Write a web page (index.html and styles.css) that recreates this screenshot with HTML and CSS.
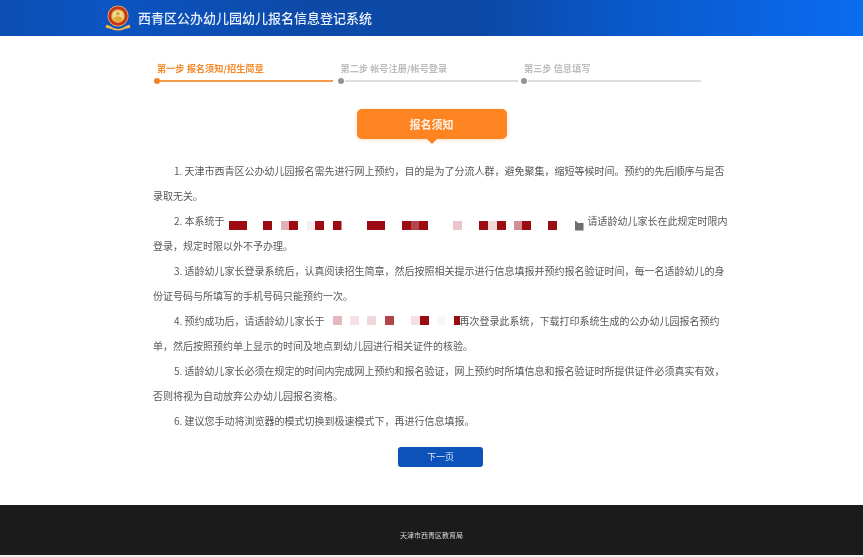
FILE: index.html
```html
<!DOCTYPE html>
<html lang="zh-CN">
<head>
<meta charset="utf-8">
<title>西青区公办幼儿园幼儿报名信息登记系统</title>
<link rel="stylesheet" href="styles.css">
</head>
<body>
<div class="page">
  <header class="top">
    <svg class="logo" viewBox="0 0 26 26" width="26" height="26" aria-hidden="true">
      <circle cx="13" cy="11" r="10.500" fill="#f0c060"/>
      <circle cx="13" cy="11" r="9.800" fill="#c4341f"/>
      <circle cx="13" cy="11" r="6.800" fill="#f2b53c"/>
      <circle cx="13" cy="11" r="5.600" fill="#e6dc9c"/>
      <path d="M8.500 13q4.500-3.500 9 0q-1 3.500-4.500 3.500t-4.500-3.500z" fill="#e2a52e"/>
      <circle cx="13" cy="8.800" r="1.800" fill="#d6a12f"/>
      <path d="M1.500 19.500l3.500 1.500q4 3 8 3t8-3l3.500-1.500 1 3q-4 1-6 1.500-3 1.500-6.500 1.500t-6.500-1.500q-2-.5-6-1.500z" fill="#f4bb45"/>
    </svg>
    <h1 class="title">西青区公办幼儿园幼儿报名信息登记系统</h1>
  </header>

  <main class="main">
    <ol class="steps">
      <li class="step active"><span class="step-label">第一步 报名须知/招生简章</span><span class="track"><i class="dot"></i><i class="bar"></i></span></li>
      <li class="step"><span class="step-label">第二步 帐号注册/帐号登录</span><span class="track"><i class="dot"></i><i class="bar"></i></span></li>
      <li class="step"><span class="step-label">第三步 信息填写</span><span class="track"><i class="dot"></i><i class="bar"></i></span></li>
    </ol>

    <div class="notice-wrap"><h2 class="notice">报名须知</h2></div>

    <section class="terms">
      <p>1. 天津市西青区公办幼儿园报名需先进行网上预约，目的是为了分流人群，避免聚集，缩短等候时间。预约的先后顺序与是否录取无关。</p>
      <p>2. 本系统于<svg class="mosaic mosaic-a" width="358" height="10" viewBox="0 0 358 10" aria-hidden="true">
        <g fill="#9c0a12">
          <rect x="1" y="0" width="18" height="9"/><rect x="35" y="0" width="9" height="9"/>
          <rect x="61" y="0" width="9" height="9"/><rect x="87" y="0" width="9" height="9"/>
          <rect x="105" y="0" width="8.500" height="9"/><rect x="139" y="0" width="18" height="9"/>
          <rect x="174" y="0" width="26" height="9"/><rect x="251" y="0" width="9" height="9"/>
          <rect x="269" y="0" width="9" height="9"/><rect x="294" y="0" width="9" height="9"/>
          <rect x="320" y="0" width="9" height="9"/>
        </g>
        <rect x="53" y="0" width="8" height="9" fill="#e2b0b4"/>
        <rect x="79" y="0" width="8" height="9" fill="#f8ecee"/>
        <rect x="183" y="0" width="8" height="9" fill="#b5454c"/>
        <rect x="225" y="0" width="9" height="9" fill="#e8c6cb"/>
        <rect x="260" y="0" width="9" height="9" fill="#eed8da"/>
        <rect x="286" y="0" width="8" height="9" fill="#cf9095"/>
        <path d="M347 -1l3 3h5.500v7.500h-8.500z" fill="#6e6e70"/>
      </svg>请适龄幼儿家长在此规定时限内登录，规定时限以外不予办理。</p>
      <p>3. 适龄幼儿家长登录系统后，认真阅读招生简章，然后按照相关提示进行信息填报并预约报名验证时间，每一名适龄幼儿的身份证号码与所填写的手机号码只能预约一次。</p>
      <p>4. 预约成功后，请适龄幼儿家长于<svg class="mosaic mosaic-b" width="135" height="10" viewBox="0 0 135 10" aria-hidden="true">
        <rect x="8" y="0" width="9" height="9" fill="#e4b8bc"/>
        <rect x="25" y="0" width="9" height="9" fill="#f6e2e5"/>
        <rect x="42" y="0" width="9" height="9" fill="#f1d6da"/>
        <rect x="60" y="0" width="9" height="9" fill="#b3444b"/>
        <rect x="86" y="0" width="9" height="9" fill="#f6e0e4"/>
        <rect x="95" y="0" width="9" height="9" fill="#9c0a12"/>
        <rect x="112" y="0" width="8" height="9" fill="#faf5f6"/>
        <rect x="129" y="0" width="6" height="9" fill="#9c0a12"/>
      </svg>再次登录此系统，下载打印系统生成的公办幼儿园报名预约单，然后按照预约单上显示的时间及地点到幼儿园进行相关证件的核验。</p>
      <p>5. 适龄幼儿家长必须在规定的时间内完成网上预约和报名验证，网上预约时所填信息和报名验证时所提供证件必须真实有效，否则将视为自动放弃公办幼儿园报名资格。</p>
      <p>6. 建议您手动将浏览器的模式切换到极速模式下，再进行信息填报。</p>
    </section>

    <div class="actions"><button class="next" type="button">下一页</button></div>
  </main>

  <footer class="foot">天津市西青区教育局</footer>
</div>
</body>
</html>
```
FILE: styles.css
```css
* { box-sizing: border-box; }
html, body { margin: 0; padding: 0; }
body {
  width: 864px;
  height: 557px;
  overflow: hidden;
  background: #f1f1f1;
  font-family: "Noto Sans CJK SC", "Liberation Sans", sans-serif;
}
.page {
  width: 864px;
  height: 555px;
  display: flex;
  flex-direction: column;
  background: #fff;
  border-right: 1px solid #d4d4d4;
  filter: blur(0.4px);
}
.top {
  flex: none;
  height: 36px;
  padding-left: 105px;
  display: flex;
  align-items: center;
  gap: 7px;
  background: linear-gradient(90deg, #0c4fb2 0%, #0b54c2 12%, #0d4aa8 35%, #0c48a4 55%, #0a58ca 72%, #0a6cf0 100%);
}
.logo { flex: none; }
.title {
  margin: 0;
  font-size: 13px;
  line-height: 36px;
  font-weight: 500;
  color: #e8f0fb;
}
.main {
  flex: 1;
  display: flex;
  flex-direction: column;
}
.steps {
  list-style: none;
  margin: 26px 0 0 154px;
  padding: 0;
  display: flex;
  height: 23px;
}
.step {
  width: 183.500px;
  display: flex;
  flex-direction: column;
  color: #bcbcbc;
}
.step-label {
  padding-left: 3px;
  font-size: 9.200px;
  line-height: 13px;
  font-weight: 700;
  white-space: nowrap;
}
.track {
  margin-top: 3px;
  display: flex;
  align-items: center;
}
.dot {
  flex: none;
  width: 6px;
  height: 6px;
  border-radius: 50%;
  background: #949496;
}
.bar {
  width: 173px;
  height: 2px;
  margin-left: 1px;
  background: #dedede;
}
.active { color: #f58a2a; }
.active .dot { background: #f58220; }
.active .bar { margin-left: 0; background: #f59a4a; }
.notice-wrap {
  margin-top: 24px;
  display: flex;
  justify-content: center;
}
.notice {
  position: relative;
  margin: 0;
  width: 150px;
  height: 30px;
  border-radius: 5px;
  background: #fd8421;
  box-shadow: 0 1px 4px rgba(253,132,33,.25);
  color: #fdf0e4;
  font-size: 11px;
  line-height: 30px;
  font-weight: 700;
  text-align: center;
}
.notice::after {
  content: "";
  position: absolute;
  left: 70px;
  bottom: -5px;
  border: 5px solid transparent;
  border-bottom: 0;
  border-top-color: #fd8421;
}
.terms {
  margin: 19px 0 0 153px;
  width: 575px;
  font-size: 10px;
  line-height: 25px;
  color: #58585a;
}
.terms p {
  margin: 0;
  text-indent: 21px;
}
.mosaic-a { margin: 0 2px 0 3px; vertical-align: -6px; }
.mosaic-b { vertical-align: -1px; }
.actions {
  margin-top: 14px;
  display: flex;
  justify-content: center;
  padding-left: 18px;
}
.next {
  width: 85px;
  height: 20px;
  padding: 0;
  border: 0;
  border-radius: 3px;
  background: #0d52b8;
  color: #dfe9f7;
  font: 9px/20px "Noto Sans CJK SC", sans-serif;
}
.foot {
  flex: none;
  height: 50px;
  background: #1b1b1b;
  color: #d8d8d8;
  font-size: 7px;
  line-height: 60px;
  text-align: center;
}
```
